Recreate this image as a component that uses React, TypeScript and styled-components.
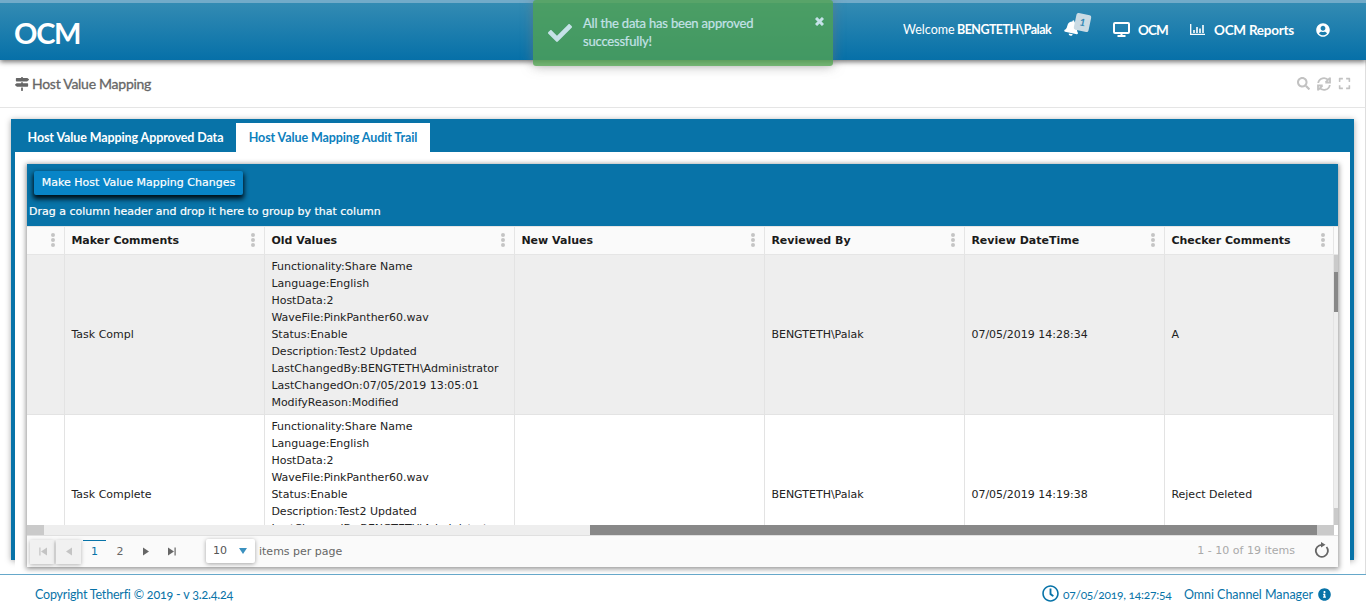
import React from "react";
import styled, { createGlobalStyle } from "styled-components";
import {
  FaMapSigns, FaBell, FaUserCircle, FaSearch, FaExpand, FaCheck, FaTimes, FaRegClock, FaInfoCircle,
} from "react-icons/fa";

const BLUE = "#0873a8";
const humanist = `Lato, "Open Sans", sans-serif`;
const gridFont = `"DejaVu Sans", Verdana, sans-serif`;

const Global = createGlobalStyle`
  * { box-sizing: border-box; }
  html, body { margin: 0; padding: 0; height: 613px; overflow: hidden; background: #fff; }
  body { font-family: ${humanist}; font-size: 13px; color: #333; }
  button { font: inherit; border: 0; margin: 0; padding: 0; background: none; color: inherit; }
  svg { display: block; flex: none; }
`;

const Page = styled.div`
  width: 1366px;
  height: 613px;
  display: flex;
  flex-direction: column;
`;

const Header = styled.header`
  height: 60px;
  flex: none;
  border-top: 3px solid #72abc9;
  background: linear-gradient(#338bb3, #0670a8);
  box-shadow: 0 2px 5px rgba(0, 0, 0, 0.55);
  color: #fff;
  display: flex;
  align-items: center;
  justify-content: space-between;
  padding: 0 36px 3px 14px;
  z-index: 1;
`;

const Brand = styled.div`
  font-size: 29px;
  font-weight: 700;
  line-height: 36px;
  letter-spacing: -1.3px;
  margin-top: 5px;
`;

const Nav = styled.nav`
  display: flex;
  align-items: center;
  height: 30px;
  margin-top: -1px;
`;

const Label = styled.span<{ $w: number; $size?: number; $ls?: number; $bold?: boolean }>`
  width: ${p => p.$w}px;
  flex: none;
  white-space: nowrap;
  font-size: ${p => p.$size ?? 13}px;
  letter-spacing: ${p => p.$ls ?? 0}px;
  font-weight: ${p => (p.$bold ? 700 : 400)};
`;

const Bell = styled.div`
  position: relative;
  margin: -3px 0 0 14px;
  width: 49px;
`;

const Count = styled.span`
  position: absolute;
  left: 11px;
  top: -6px;
  width: 15px;
  height: 17px;
  border-radius: 2px;
  background: #cbdbe4;
  color: #3387b3;
  font-size: 10px;
  font-weight: 700;
  line-height: 17px;
  text-align: center;
  transform: rotate(12deg);
`;

const NavIcon = styled.span<{ $gap: number }>`
  margin-right: ${p => p.$gap}px;
`;

const Toast = styled.div`
  position: absolute;
  left: 533px;
  top: 0;
  width: 300px;
  height: 66px;
  z-index: 3;
  border-radius: 3px;
  background: rgba(81, 163, 81, 0.8);
  box-shadow: 0 0 12px rgba(120, 120, 120, 0.6);
  color: #c5e2e8;
  display: flex;
  padding: 15px 9px 0 15px;
`;

const ToastText = styled.p`
  margin: -1px 0 0 11px;
  font-size: 13px;
  line-height: 18px;
  letter-spacing: -0.19px;
  -webkit-text-stroke: 0.2px #c5e2e8;
  flex: 1;
`;

const TitleBar = styled.div`
  height: 48px;
  flex: none;
  border-bottom: 1px solid #e5e5e5;
  border-right: 1px solid #dedede;
  display: flex;
  align-items: center;
  padding: 0 14px 0 15px;
  color: #666;
`;

const Title = styled.h1`
  margin: 0 auto 0 3px;
  font-size: 14px;
  letter-spacing: -0.27px;
  font-weight: 400;
  -webkit-text-stroke: 0.3px #666;
`;

const Tools = styled.div`
  display: flex;
  align-items: center;
  gap: 7px;
  color: #c2c2c2;
`;

const Main = styled.main`
  flex: 1;
  min-height: 0;
  border-right: 1px solid #dedede;
  padding: 11px 11px 0;
`;

const TabPanel = styled.section`
  height: 441px;
  border: solid ${BLUE};
  border-width: 4px 4px 0;
  box-shadow: 0 1px 6px rgba(0, 0, 0, 0.35);
  background: #fff;
`;

const Tabs = styled.div`
  height: 29px;
  background: ${BLUE};
  display: flex;
`;

const Tab = styled.button<{ $active?: boolean; $w: number }>`
  width: ${p => p.$w}px;
  font-size: 12.5px;
  letter-spacing: -0.1px;
  font-weight: 700;
  color: ${p => (p.$active ? "#0d80bd" : "#fff")};
  background: ${p => (p.$active ? "#fff" : "transparent")};
  white-space: nowrap;
`;

const TabBody = styled.div`
  height: 421px;
  padding: 12px 12px 0;
  background: #fff;
`;

const Grid = styled.div`
  height: 403px;
  display: flex;
  flex-direction: column;
  font-family: ${gridFont};
  font-size: 11px;
  box-shadow: 0 1px 5px 1px rgba(0, 0, 0, 0.42);
  color: #222;
`;

const GridToolbar = styled.div`
  height: 62px;
  flex: none;
  background: ${BLUE};
  color: #fff;
  padding: 7px 7px 0;
`;

const Primary = styled.button`
  display: block;
  width: 209px;
  height: 24px;
  border-radius: 2px;
  background: #0885c8;
  box-shadow: 0 3px 5px 1px #001019;
  font-size: 11px;
  line-height: 22px;
  white-space: nowrap;
  -webkit-text-stroke: 0.2px #fff;
`;

const GroupHint = styled.div`
  margin: 10px 0 0 -5px;
  line-height: 14px;
  -webkit-text-stroke: 0.2px #fff;
`;

const cols = "38px 200px 250px 250px 200px 200px 169px";

const HeadRow = styled.div`
  height: 29px;
  flex: none;
  display: grid;
  grid-template-columns: ${cols} 4px;
  background: #fafafa;
  border-top: 1px solid #e5e5e5;
  border-bottom: 1px solid #e5e5e5;
`;

const HeadCell = styled.div`
  display: flex;
  align-items: center;
  justify-content: space-between;
  padding: 0 9px 0 6.4px;
  border-right: 1px solid #e5e5e5;
  font-weight: 700;
  color: #1b1b1b;
  white-space: nowrap;
  &:last-child { padding-right: 8px; }
`;

const Dots = styled.span`
  margin: -2px 0 0 auto;
  display: flex;
  flex-direction: column;
  gap: 1px;
  &::before, &::after, & > i {
    content: "";
    width: 4px;
    height: 4px;
    border-radius: 2px;
    background: #c4c4c4;
  }
`;

const Viewport = styled.div`
  height: 270px;
  flex: none;
  display: flex;
  overflow: hidden;
  background: #fff;
`;

const Rows = styled.div`
  width: 1307px;
  flex: none;
`;

const Row = styled.div<{ $alt?: boolean }>`
  height: 160px;
  display: grid;
  grid-template-columns: ${cols};
  background: ${p => (p.$alt ? "#eeeeee" : "#fff")};
  border-bottom: 1px solid #e3e3e3;
`;

const Cell = styled.div`
  display: flex;
  flex-direction: column;
  justify-content: center;
  padding-left: 6.4px;
  line-height: 17px;
  white-space: nowrap;
  overflow: hidden;
  border-right: 1px solid #e3e3e3;
`;

const VScroll = styled.div`
  width: 4px;
  height: 270px;
  display: flex;
  flex-direction: column;
  background: #eee;
`;

const HScroll = styled.div`
  height: 10px;
  flex: none;
  display: flex;
  background: #eee;
`;

const Bar = styled.span<{ $len: number; $tone: string }>`
  flex: 0 0 ${p => p.$len}px;
  background: ${p => p.$tone};
`;

const Pager = styled.div`
  height: 32px;
  flex: none;
  display: flex;
  background: #fafafa;
  border-top: 1px solid #e0e0e0;
  padding: 4px 9px 0 3px;
  color: #555;
`;

const PageButton = styled.button<{ $raised?: boolean; $current?: boolean; $w?: number }>`
  width: ${p => p.$w ?? 24}px;
  height: 24px;
  margin-right: 2px;
  display: flex;
  align-items: center;
  justify-content: center;
  padding-bottom: 2px;
  background: ${p => (p.$raised ? "#f1f1f1" : "transparent")};
  box-shadow: ${p => (p.$raised ? "0 1px 4px rgba(0,0,0,.28)" : "none")};
  color: ${p => (p.$raised ? "#c4c4c4" : p.$current ? BLUE : "#666")};
  border-top: 1px solid ${p => (p.$current ? BLUE : "transparent")};
`;

const SizeSelect = styled.div`
  width: 49px;
  height: 24px;
  margin: -1px 0 0 20px;
  padding: 0 8px 1px 7px;
  display: flex;
  align-items: center;
  justify-content: space-between;
  background: #fff;
  border-radius: 2px;
  box-shadow: 0 1px 4px rgba(0, 0, 0, 0.35);
`;

const PagerText = styled.span<{ $push?: boolean }>`
  line-height: ${p => (p.$push ? 22 : 23)}px;
  margin-left: ${p => (p.$push ? "auto" : "4px")};
  color: ${p => (p.$push ? "#a9a9a9" : "#666")};
`;

const Footer = styled.footer`
  height: 39px;
  flex: none;
  z-index: 1;
  border-top: 1px solid #66a8ca;
  background: #fff;
  color: ${BLUE};
  display: flex;
  align-items: center;
  padding: 0 35px;
  font-feature-settings: "onum";
`;

const FooterRight = styled.div`
  margin-left: auto;
  display: flex;
  align-items: center;
`;

const ClockIcon = styled(FaRegClock)`
  margin: -2px 4px 0 0;
`;

const headings = ["", "Maker Comments", "Old Values", "New Values", "Reviewed By", "Review DateTime", "Checker Comments"];

const oldValues = [
  "Functionality:Share Name", "Language:English", "HostData:2", "WaveFile:PinkPanther60.wav", "Status:Enable",
  "Description:Test2 Updated", "LastChangedBy:BENGTETH\\Administrator", "LastChangedOn:07/05/2019 13:05:01", "ModifyReason:Modified",
];

const records = [
  { maker: "Task Compl", by: "BENGTETH\\Palak", at: "07/05/2019 14:28:34", checker: "A" },
  { maker: "Task Complete", by: "BENGTETH\\Palak", at: "07/05/2019 14:19:38", checker: "Reject Deleted" },
];

const Arrow = ({ left, stop }: { left?: boolean; stop?: boolean }) => (
  <svg width="9" height="9" viewBox="0 0 9 9" fill="currentColor">
    <g transform={left ? "translate(9 0) scale(-1 1)" : undefined}>
      <path d={stop ? "M0 .5 6 4.500 0 8.500zM6.500.5h1.200v8H6.500z" : "M1 .5 7 4.500 1 8.500z"} />
    </g>
  </svg>
);

export default function App() {
  return (
    <Page>
      <Global />
      <Header>
        <Brand>OCM</Brand>
        <Nav>
          <Label $w={54} $size={12.5}>Welcome</Label>
          <Label $w={93} $size={12.5} $bold $ls={-0.55}>BENGTETH\Palak</Label>
          <Bell><FaBell size={16} style={{ transform: "rotate(12deg)" }} /><Count>1</Count></Bell>
          <NavIcon $gap={8}>
            <svg width="17" height="15" viewBox="0 0 17 15" fill="none" stroke="#fff" strokeWidth="2">
              <rect x="1" y="1" width="15" height="10" rx="1" /><path d="M8.500 11v3M4.500 14h8" />
            </svg>
          </NavIcon>
          <Label $w={52} $size={13.5} $bold $ls={-0.9}>OCM</Label>
          <NavIcon $gap={9}>
            <svg width="15" height="11" viewBox="0 0 15 11" fill="none" stroke="#fff">
              <path strokeWidth="1.300" d="M.7 0v10.300H15" />
              <path strokeWidth="1.600" d="M4 9V6M7 9V3M10 9V4.500M13 9V1" />
            </svg>
          </NavIcon>
          <Label $w={102} $size={13.5} $bold $ls={-0.25}>OCM Reports</Label>
          <FaUserCircle size={14} />
        </Nav>
      </Header>
      <Toast>
        <FaCheck size={24} style={{ marginTop: 6 }} />
        <ToastText>All the data has been approved<br />successfully!</ToastText>
        <svg width="9" height="9" viewBox="0 0 9 9" style={{ marginTop: 2 }}>
          <path stroke="currentColor" strokeWidth="3" d="M1 1l7 7M8 1 1 8" />
        </svg>
      </Toast>
      <TitleBar>
        <FaMapSigns size={14} />
        <Title>Host Value Mapping</Title>
        <Tools>
          <FaSearch size={13} />
          <svg width="14" height="14" viewBox="0 0 14 14" fill="none" stroke="currentColor" strokeWidth="1.800">
            <path d="M1.200 6A5.700 5.700 0 0 1 11.500 3.500M12.800 8A5.700 5.700 0 0 1 2.500 10.500M13 .5v5H8.300M1 13.500v-5h4.700M13 .8 8.500 5.300M1 13.200 5.500 8.700" />
          </svg>
          <FaExpand size={13} />
        </Tools>
      </TitleBar>
      <Main>
        <TabPanel>
          <Tabs>
            <Tab $w={221}>Host Value Mapping Approved Data</Tab>
            <Tab $w={194} $active>Host Value Mapping Audit Trail</Tab>
          </Tabs>
          <TabBody>
            <Grid>
              <GridToolbar>
                <Primary>Make Host Value Mapping Changes</Primary>
                <GroupHint>Drag a column header and drop it here to group by that column</GroupHint>
              </GridToolbar>
              <HeadRow>
                {headings.map((h, i) => (
                  <HeadCell key={i}>{h}<Dots><i /></Dots></HeadCell>
                ))}
              </HeadRow>
              <Viewport>
                <Rows>
                  {records.map((r, i) => (
                    <Row key={r.at} $alt={i === 0}>
                      <Cell />
                      <Cell>{r.maker}</Cell>
                      <Cell>{oldValues.map(v => <div key={v}>{v}</div>)}</Cell>
                      <Cell />
                      <Cell>{r.by}</Cell>
                      <Cell>{r.at}</Cell>
                      <Cell>{r.checker}</Cell>
                    </Row>
                  ))}
                </Rows>
                <VScroll>
                  <Bar $len={17} $tone="#cacaca" />
                  <Bar $len={40} $tone="#888" />
                  <Bar $len={196} $tone="#eee" />
                  <Bar $len={17} $tone="#cacaca" />
                </VScroll>
              </Viewport>
              <HScroll>
                <Bar $len={17} $tone="#cacaca" />
                <Bar $len={546} $tone="#eee" />
                <Bar $len={727} $tone="#888" />
                <Bar $len={17} $tone="#cacaca" />
                <Bar $len={4} $tone="#fff" />
              </HScroll>
              <Pager>
                <PageButton $raised><Arrow left stop /></PageButton>
                <PageButton $raised $w={25}><Arrow left /></PageButton>
                <PageButton $current $w={23}>1</PageButton>
                <PageButton>2</PageButton>
                <PageButton $w={25}><Arrow /></PageButton>
                <PageButton $w={23}><Arrow stop /></PageButton>
                <SizeSelect>
                  10
                  <svg width="8" height="6" viewBox="0 0 8 6"><path fill="#3b91bf" d="M0 0h8L4 6z" /></svg>
                </SizeSelect>
                <PagerText>items per page</PagerText>
                <PagerText $push>1 - 10 of 19 items</PagerText>
                <svg width="15" height="16" viewBox="0 0 15 16" fill="none" style={{ marginLeft: 19, marginTop: 2 }}>
                  <path stroke="#666" strokeWidth="1.800" d="M8 2.800A6 6 0 1 0 12.500 5" />
                  <path fill="#666" d="M7 0v5.500l4.500-2.700z" />
                </svg>
              </Pager>
            </Grid>
          </TabBody>
        </TabPanel>
      </Main>
      <Footer>
        <Label $w={220} $size={12.5} $ls={-0.2}>Copyright Tetherfi © 2019 - v 3.2.4.24</Label>
        <FooterRight>
          <ClockIcon size={17} />
          <Label $w={121} $size={12} $ls={-0.25}>07/05/2019, 14:27:54</Label>
          <Label $w={134} $size={12.5} $ls={-0.05}>Omni Channel Manager</Label>
          <FaInfoCircle size={13} />
        </FooterRight>
      </Footer>
    </Page>
  );
}
